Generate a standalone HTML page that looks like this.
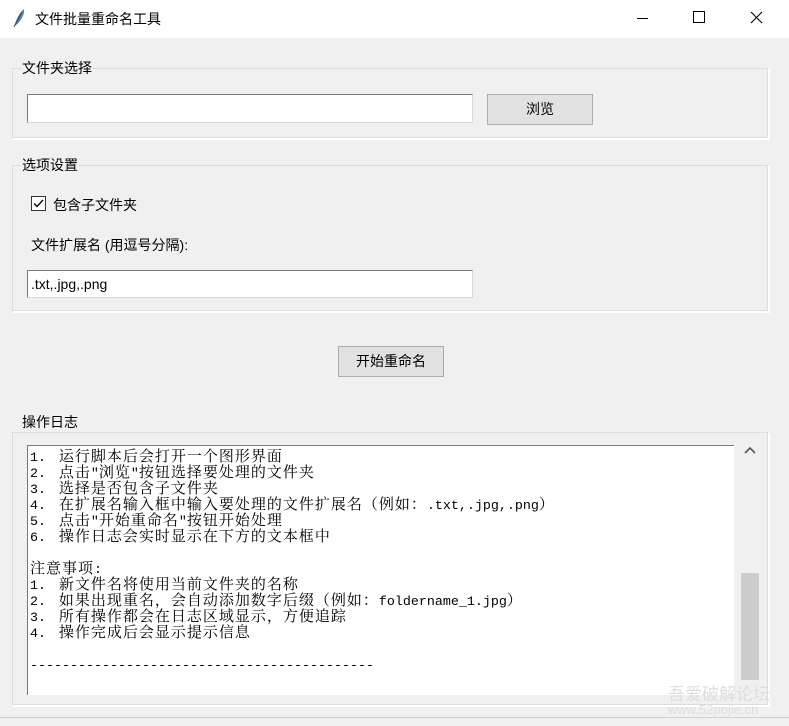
<!DOCTYPE html>
<html><head><meta charset="utf-8"><style>
body{margin:0;width:789px;height:726px;background:#f0f0f0;font-family:"Liberation Sans","Microsoft YaHei","Noto Sans CJK SC",sans-serif;font-size:14px;color:#000;position:relative;overflow:hidden}
.a{position:absolute}
.title{left:0;top:0;width:789px;height:38px;background:#fff}
.frame{border:1px solid #dcdcdc;border-right-color:#fff;border-bottom-color:#fff;box-shadow:inset -1px -1px 0 #dcdcdc,1px 1px 0 #fff}
.lbl{background:#f0f0f0;padding:0 1px}
.entry{background:#fff;border:1px solid #7a7a7a;border-right-color:#d8d8d8;border-bottom-color:#d8d8d8;box-sizing:border-box}
.btn{background:#e1e1e1;border:1px solid #adadad;box-sizing:border-box;text-align:center}
.log{font-family:"Noto Serif CJK SC",serif;font-size:15px;letter-spacing:1px}
.log div{height:16px;line-height:16px;white-space:pre;overflow:visible}
.m{font-family:"Liberation Mono",monospace;font-size:13.33px;letter-spacing:0;line-height:16px}
</style></head><body>
<div class="a title"></div>
<svg class="a" style="left:12px;top:8px" width="14" height="20" viewBox="0 0 14 20"><path d="M2 19 C4 12 7 5 12 1 C13 6 9 13 4 17 Z" fill="#5d7fa6"/><path d="M2 19 L10 4" stroke="#2a3f5a" stroke-width="0.8"/></svg>
<div class="a" style="left:35px;top:9px;font-size:14px">文件批量重命名工具</div>
<div class="a" style="left:637px;top:18px;width:11px;height:1px;background:#000"></div>
<div class="a" style="left:693px;top:11px;width:10px;height:10px;border:1px solid #000"></div>
<svg class="a" style="left:750px;top:11px" width="13" height="13"><path d="M1 1L12 12M12 1L1 12" stroke="#000" stroke-width="1.1"/></svg>

<div class="a frame" style="left:12px;top:68px;width:755px;height:69px"></div>
<div class="a lbl" style="left:21px;top:58px">文件夹选择</div>
<div class="a entry" style="left:27px;top:94px;width:446px;height:29px"></div>
<div class="a btn" style="left:487px;top:94px;width:106px;height:31px;line-height:29px">浏览</div>

<div class="a frame" style="left:12px;top:165px;width:755px;height:145px"></div>
<div class="a lbl" style="left:21px;top:155px">选项设置</div>
<div class="a" style="left:31px;top:196px;width:13px;height:13px;border:1px solid #333;background:#fff"></div>
<svg class="a" style="left:32px;top:197px" width="13" height="13"><path d="M2 6.5L5 9.5L11 3" stroke="#000" stroke-width="1.3" fill="none"/></svg>
<div class="a" style="left:53px;top:195px">包含子文件夹</div>
<div class="a" style="left:31px;top:235px">文件扩展名 (用逗号分隔):</div>
<div class="a entry" style="left:27px;top:270px;width:446px;height:28px;padding:5px 3px;font-size:14px">.txt,.jpg,.png</div>

<div class="a btn" style="left:338px;top:346px;width:106px;height:31px;line-height:29px">开始重命名</div>

<div class="a frame" style="left:12px;top:432px;width:755px;height:272px"></div>
<div class="a lbl" style="left:21px;top:412px">操作日志</div>
<div class="a" style="left:27px;top:445px;width:707px;height:250px;background:#fff;border-left:1px solid #7a7a7a;border-top:1px solid #7a7a7a;box-sizing:border-box"></div>
<div class="a log" style="left:30px;top:448px">
<div><span class="m">1. </span> 运行脚本后会打开一个图形界面</div>
<div><span class="m">2. </span> 点击<span class="m">"</span>浏览<span class="m">"</span>按钮选择要处理的文件夹</div>
<div><span class="m">3. </span> 选择是否包含子文件夹</div>
<div><span class="m">4. </span> 在扩展名输入框中输入要处理的文件扩展名（例如：<span class="m">.txt,.jpg,.png</span>）</div>
<div><span class="m">5. </span> 点击<span class="m">"</span>开始重命名<span class="m">"</span>按钮开始处理</div>
<div><span class="m">6. </span> 操作日志会实时显示在下方的文本框中</div>
<div></div>
<div>注意事项<span class="m">:</span></div>
<div><span class="m">1. </span> 新文件名将使用当前文件夹的名称</div>
<div><span class="m">2. </span> 如果出现重名，会自动添加数字后缀（例如：<span class="m">foldername_1.jpg</span>）</div>
<div><span class="m">3. </span> 所有操作都会在日志区域显示，方便追踪</div>
<div><span class="m">4. </span> 操作完成后会显示提示信息</div>
<div></div>
<div><span class="m">-------------------------------------------</span></div>
</div>
<div class="a" style="left:740px;top:440px;width:20px;height:255px;background:#f0f0f0"></div>
<svg class="a" style="left:744px;top:447px" width="12" height="8"><path d="M1 6L6 1L11 6" stroke="#555" stroke-width="1.6" fill="none"/></svg>
<div class="a" style="left:741px;top:573px;width:18px;height:107px;background:#cdcdcd"></div>
<div class="a" style="left:0px;top:717px;width:789px;height:1px;background:#d0d0d0"></div>
<div class="a" style="left:668px;top:680px;color:#ddd;font-size:17px">吾爱破解论坛</div>
<div class="a" style="left:668px;top:702px;color:#ddd;font-size:13px">www.52pojie.cn</div>
</body></html>
